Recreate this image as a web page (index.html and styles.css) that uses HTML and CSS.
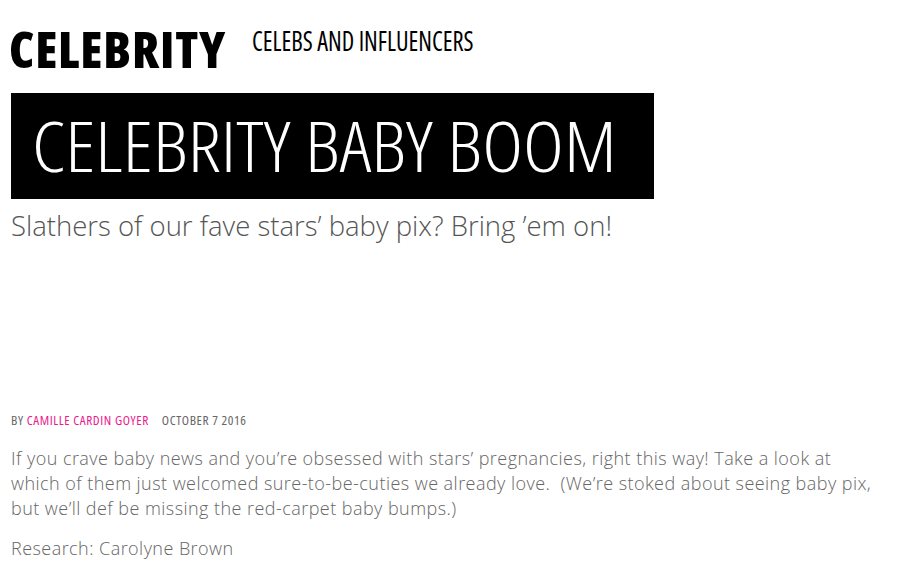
FILE: index.html
```html
<!DOCTYPE html>
<html>
<head>
<meta charset="utf-8">
<link rel="stylesheet" href="styles.css">
</head>
<body>
<header class="top">
  <span class="section">CELEBRITY</span>
  <span class="subsection">CELEBS AND INFLUENCERS</span>
</header>
<h1 class="title"><span class="title-text">CELEBRITY BABY BOOM</span></h1>
<p class="dek">Slathers of our fave stars’ baby pix? Bring ’em on!</p>
<div class="byline"><span class="by">BY</span> <span class="author">CAMILLE CARDIN GOYER</span><span class="date">OCTOBER 7 2016</span></div>
<div class="body">
  <p>If you crave baby news and you’re obsessed with stars’ pregnancies, right this way! Take a look at which of them just welcomed sure-to-be-cuties we already love.&nbsp; (We’re stoked about seeing baby pix, but we’ll def be missing the red-carpet baby bumps.)</p>
  <p>Research: Carolyne Brown</p>
</div>
</body>
</html>
```
FILE: styles.css
```css
body {
  margin: 0;
  padding: 0 11px;
  background: #fff;
  font-family: "Open Sans", sans-serif;
  color: #000;
}
.top {
  display: flex;
  align-items: flex-start;
  padding-top: 24px;
  height: 93px;
  box-sizing: border-box;
}
.section {
  font-size: 50px;
  font-weight: 800;
  font-stretch: 75%;
  line-height: 50px;
  letter-spacing: 0.8px;
  margin-left: -2px;
}
.subsection {
  display: inline-block;
  margin-left: 26px;
  margin-top: 4px;
  font-size: 26.6px;
  font-weight: 400;
  font-stretch: 75%;
  line-height: 26px;
  transform: scaleX(0.916);
  transform-origin: left top;
  white-space: nowrap;
}
.title {
  margin: 0;
  width: 643px;
  height: 106px;
  background: #000;
  color: #fff;
  font-weight: 300;
  font-size: 70px;
  font-stretch: 75%;
  line-height: 104px;
  box-sizing: border-box;
  padding-left: 21px;
  white-space: nowrap;
}
.title-text {
  display: inline-block;
  transform: scaleX(1.11);
  transform-origin: left center;
}
.dek {
  margin: 9px 0 0;
  font-weight: 300;
  font-size: 27.5px;
  line-height: 36px;
  color: #555;
}
.byline {
  margin-top: 168px;
  font-size: 13.3px;
  line-height: 16px;
  font-stretch: 75%;
  font-weight: 400;
  letter-spacing: 0.6px;
  color: #666;
}
.author { color: #ec1b8c; }
.date { margin-left: 13px; }
.body {
  margin-top: 18px;
  width: 868px;
  font-size: 18px;
  font-weight: 300;
  letter-spacing: 0.45px;
  line-height: 25px;
  color: #666;
}
.body p { margin: 0 0 15px; }
```
